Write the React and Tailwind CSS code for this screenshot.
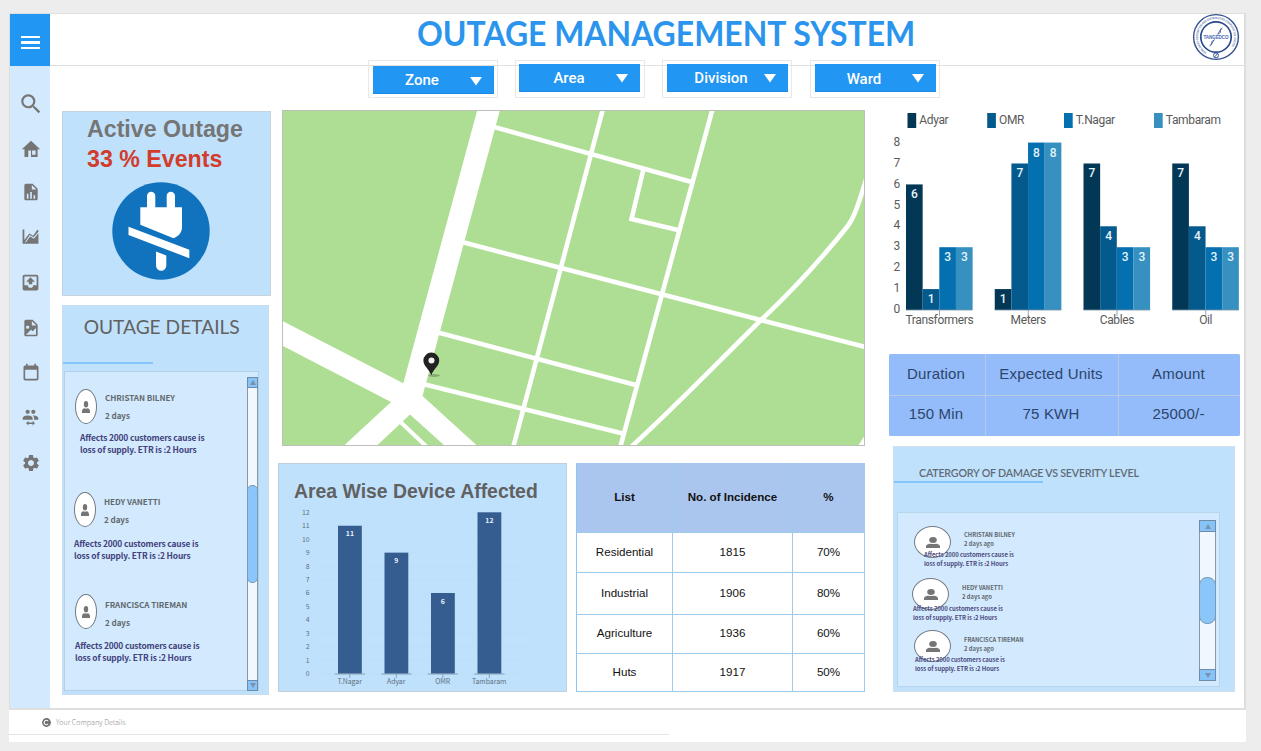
import React from "react";
import { MdSearch, MdSettings } from "react-icons/md";

const ICONS = {
  home: "M12 3L22 12.2H19.2V20.6H12V13.6H9V20.6H4.9V12.2H2ZM13.2 13.6V18.4H17V13.6Z",
  fileChart:
    "M13,9H18.5L13,3.5V9M6,2H14L20,8V20A2,2 0 0,1 18,22H6C4.89,22 4,21.1 4,20V4C4,2.89 4.89,2 6,2M7,20H9V14H7V20M11,20H13V12H11V20M15,20H17V16H15V20Z",
  area: "M2 3H4.2V16.5L10.5 8.2L15.4 11.2L20.6 3.4L22 4.4V21H2ZM5 19.2H6.2L11.6 11.9L16.4 14.8L22 8V6L16 13.1L11 10Z",
  inbox:
    "M14,14H10V11H7L12,6L17,11H14V14M5,15V5H19V15H15A3,3 0 0,1 12,18A3,3 0 0,1 9,15H5M19,3H5C3.89,3 3,3.9 3,5V19A2,2 0 0,0 5,21H19A2,2 0 0,0 21,19V5A2,2 0 0,0 19,3",
  fileImage:
    "M13,9H18.5L13,3.5V9M6,2H14L20,8V20A2,2 0 0,1 18,22H6C4.89,22 4,21.1 4,20V4C4,2.89 4.89,2 6,2M6,20H18V12L14,16L12,14L6,20M8,9A2,2 0 0,0 6,11A2,2 0 0,0 8,13A2,2 0 0,0 10,11A2,2 0 0,0 8,9Z",
  calendar:
    "M19,19H5V8H19M16,1V3H8V1H6V3H5C3.89,3 3,3.89 3,5V19A2,2 0 0,0 5,21H19A2,2 0 0,0 21,19V5C21,3.89 20.1,3 19,3H18V1",
  people:
    "M16,9C18.33,9 23,10.17 23,12.5V15H17V12.5C17,11 16.19,9.89 15.04,9.05L16,9M8,9C10.33,9 15,10.17 15,12.5V15H1V12.5C1,10.17 5.67,9 8,9M8,7A3,3 0 0,1 5,4A3,3 0 0,1 8,1A3,3 0 0,1 11,4A3,3 0 0,1 8,7M16,7A3,3 0 0,1 13,4A3,3 0 0,1 16,1A3,3 0 0,1 19,4A3,3 0 0,1 16,7M9,16.75V19H15V16.75L18.25,20L15,23.25V21H9V23.25L5.75,20L9,16.75Z",
};

function Icon({ d, size = 20 }) {
  return (
    <svg width={size} height={size} viewBox="0 0 24 24" fill="currentColor" fillRule="evenodd">
      <path d={d} />
    </svg>
  );
}

function Cell({ children }) {
  return <div className="flex h-[45px] shrink-0 items-center justify-center">{children}</div>;
}

function Sidebar() {
  return (
    <nav className="flex w-[40px] flex-col bg-[#d3e9fd] text-[#757575]">
      <div className="flex h-[52px] flex-col justify-center gap-[3px] bg-[#2196f3] px-[11px] pt-[5px]">
        <i className="h-[2px] w-[19px] bg-white" />
        <i className="h-[3px] w-[19px] bg-white" />
        <i className="h-[2px] w-[19px] bg-white" />
      </div>
      <div className="flex flex-col pt-[15px] pl-px">
        <Cell><MdSearch size={26} /></Cell>
        <Cell><Icon d={ICONS.home} size={22} /></Cell>
      </div>
      <div className="-mt-[2px] flex flex-col pl-px">
        <Cell><Icon d={ICONS.fileChart} /></Cell>
        <Cell><Icon d={ICONS.area} size={19} /></Cell>
      </div>
      <div className="mt-px flex flex-col pl-px">
        <Cell><Icon d={ICONS.inbox} size={21} /></Cell>
        <Cell><Icon d={ICONS.fileImage} /></Cell>
        <Cell><Icon d={ICONS.calendar} size={20} /></Cell>
        <Cell><Icon d={ICONS.people} size={17} /></Cell>
        <Cell><MdSettings size={20} /></Cell>
      </div>
    </nav>
  );
}

function Logo() {
  return (
    <svg width="48" height="48" viewBox="-24 -24 48 48">
      <circle r="22.4" fill="#fff" stroke="#33508f" strokeWidth="1.4" />
      <circle r="15.2" fill="none" stroke="#2b4a8c" strokeWidth="1.7" />
      <path id="ring" d="M-9.5 15.3A18 18 0 1 1 9.5 15.3" fill="none" />
      <text fontFamily="Liberation Sans, sans-serif" fontSize="3" fill="#5b74a8" fontWeight="bold">
        <textPath href="#ring" textLength="84" lengthAdjust="spacingAndGlyphs">TAMILNADU GENERATION AND DISTRIBUTION CORPORATION LIMITED</textPath>
      </text>
      <circle cy="18.4" r="2.5" fill="none" stroke="#33508f" strokeWidth="1" />
      <path d="M-1.2 19.8L1.2 17" stroke="#33508f" strokeWidth="1" />
      <path d="M6.5 -9L4.2 -6.8L4.5 -4.6L1.4 -2.4M-6.5 9L-4 6.8L-4.4 4.8L-1.2 2.5M5.5 -9L2 -3.2M-5.5 8.6L-2.2 3.2" fill="none" stroke="#33508f" strokeWidth=".8" />
      <text y="1.7" textAnchor="middle" fontFamily="Liberation Sans, sans-serif" fontWeight="bold" fontSize="4.6" fill="#4a6bb0" textLength="25">TANGEDCO</text>
    </svg>
  );
}

function Filter({ label, outer, labelBox, arrow }) {
  return (
    <div className={"flex h-[38px] border border-[#e8e8e8] " + outer}>
      <button className="flex h-[28px] w-[121px] items-center border-b border-[#1e88e5] bg-[#2196f3] font-['Roboto',sans-serif] text-[15px] font-medium text-white">
        <span className={"text-center leading-[20px] " + labelBox}>{label}</span>
        <svg width="12" height="9" viewBox="0 0 12 9" className={arrow}>
          <path d="M0 0H12L6 8.5Z" fill="#fff" />
        </svg>
      </button>
    </div>
  );
}

function ActiveOutage() {
  return (
    <section className="h-[185px] w-[209px] border border-[#c9d3de] bg-[#c0e1fc] pt-[2px]">
      <h2 className="pl-[24px] font-['Liberation_Sans',sans-serif] text-[23.2px] leading-[30px] font-bold text-[#757575]">Active Outage</h2>
      <p className="pl-[24px] font-['Liberation_Sans',sans-serif] text-[23.2px] leading-[30px] font-bold text-[#d13c2c]">33 % Events</p>
      <svg width="98" height="98" viewBox="112 182 98 98" className="mt-[8px] ml-[49px]">
        <circle cx="161" cy="231" r="48.7" fill="#1173bd" />
        <g fill="#fff">
          <path d="M147 208V196A4.1 4.1 0 0 1 155.3 196V208ZM166.7 208V196A4.1 4.1 0 0 1 175 196V208Z" />
          <path d="M140.3 207.3H182V227C182 233 178 236.5 173.5 238.3L140.3 224.7Z" />
          <path d="M128.5 226.7L189.3 249.7V258.2L128.5 235Z" />
          <path d="M156 251.5L166.3 255.5V265.5A5.1 5.1 0 0 1 156 265.5Z" />
        </g>
      </svg>
    </section>
  );
}

function Person({ w, h }) {
  return (
    <svg width={w} height={h} viewBox="0 0 14 11" preserveAspectRatio="none" fill="#757575" className="shrink-0">
      <ellipse cx="7" cy="3" rx="3.8" ry="3" />
      <path d="M0 11V9.6C0 7.4 2.500 6.900 4 6.700C5.500 7.200 8.500 7.200 10 6.700C11.500 6.900 14 7.400 14 9.600V11Z" />
    </svg>
  );
}

function OutageItem({ name, box, text, head, label }) {
  return (
    <article className={"font-['Noto_Sans_CJK_SC','Noto_Sans',sans-serif] font-bold " + box}>
      <div className={"flex h-[36px] " + head}>
        <div className="flex h-[35px] w-[22px] shrink-0 items-center justify-center rounded-[50%] border border-[#707880] bg-white pt-px">
          <Person w={8} h={12} />
        </div>
        <div className={"pl-[8px] text-[8.1px] leading-[18px] tracking-[-0.06px] whitespace-nowrap text-[#616a70] " + label}>
          <p>{name}</p>
          <p>2 days</p>
        </div>
      </div>
      <p className={"text-[8.4px] leading-[12px] tracking-[-0.14px] whitespace-nowrap text-[#42427c] " + text}>
        Affects 2000 customers cause is<br />loss of supply. ETR is :2 Hours
      </p>
    </article>
  );
}

function ScrollBar({ box, end, before, thumb }) {
  const arrow = "flex shrink-0 items-center justify-center border border-[#6f8ba6] bg-[#85c3f8] ";
  return (
    <div className={"flex flex-col border border-[#8b97a3] bg-[#f0f7fe] " + box}>
      <div className={arrow + end}>
        <svg width="6" height="5" viewBox="0 0 6 5"><path d="M3 0L6 5H0Z" fill="#7a93aa" /></svg>
      </div>
      <div className={before} />
      <div className={"shrink-0 border border-[#7b99b5] bg-[#8ac6fa] " + thumb} />
      <div className="flex-1" />
      <div className={arrow + end}>
        <svg width="6" height="5" viewBox="0 0 6 5"><path d="M0 0H6L3 5Z" fill="#7a93aa" /></svg>
      </div>
    </div>
  );
}

function OutageDetails() {
  return (
    <section className="mt-[9px] h-[390px] w-[207px] border border-[#cbdcec] bg-[#c0e1fc] pl-px">
      <h2 className="w-[170px] origin-left scale-x-[0.982] pt-[8px] pl-[20px] font-['Lato',sans-serif] text-[19.5px] leading-[26px] whitespace-nowrap text-[#616161]">OUTAGE DETAILS</h2>
      <div className="mt-[22px] -ml-px h-[2px] w-[90px] bg-[#86c5f9]" />
      <div className="mt-[7px] flex h-[320px] w-[195px] justify-between border border-[#b4d0e8] bg-[#d3e9fd]">
        <div>
          <OutageItem name="CHRISTAN BILNEY" box="h-[103px] pt-[17px]" head="pl-[10px]" text="mt-[6px] pl-[15px]" label="" />
          <OutageItem name="HEDY VANETTI" box="h-[102px] pt-[17px]" head="pl-[9px]" text="mt-[9px] pl-[9px]" label="pt-px" />
          <OutageItem name="FRANCISCA TIREMAN" box="pt-[17px]" head="pl-[10px]" text="mt-[9px] pl-[10px]" label="pt-[2px]" />
        </div>
        <ScrollBar box="mt-[5px] h-[314px] w-[11px]" end="h-[11px] -mx-px -my-px" before="h-[98px]" thumb="h-[98px] -mx-px rounded-[5px]" />
      </div>
    </section>
  );
}

function CityMap() {
  return (
    <svg width="583" height="336" viewBox="282 110 583 336" className="ml-[4px] block">
      <rect x="282" y="110" width="583" height="336" fill="#aede94" />
      <path d="M477.3 110H500L422.5 396L478 446.5H445.5L410 414.5L376 446.5H343L391 402L282 345.5V320.8L403.3 383.3Z" fill="#fff" />
      <g fill="none" stroke="#fff" strokeWidth="4.6">
        <path d="M495 127.3L691.7 182M602.7 110L513 448M712.3 110L620 448M463 242.3L661.7 294.3L866 347.2M439 332.8L635.7 385M424 384.2L621.7 433.3" />
        <path d="M643.5 169L631.5 219L680 230.5" />
        <path d="M400 421.5L428 448" strokeWidth="4" />
        <path d="M866.500 178C858 206 854 218 847 227C822 258 790 293 761 320C718 362 680 402 630 448" />
      </g>
      <path d="M858 446L865 435V446Z" fill="#fff" />
      <ellipse cx="434" cy="375.500" rx="6" ry="1.400" fill="#5b6b55" opacity=".45" />
      <path d="M431.3 375.300C429 369 423.400 366 423.400 360.500A7.900 7.900 0 0 1 439.200 360.500C439.200 366 433.500 369 431.300 375.300Z" fill="#222" />
      <circle cx="431.500" cy="360.600" r="3" fill="#f3f3ee" />
      <rect x="282.500" y="110.500" width="582" height="335" fill="none" stroke="#bcc0b8" />
    </svg>
  );
}

const DEVICES = [["T.Nagar", 11], ["Adyar", 9], ["OMR", 6], ["Tambaram", 12]];

function DeviceChart() {
  const unit = 13.45;
  const base = 673.7;
  return (
    <section className="h-[229px] w-[289px] border border-[#c0cfdd] bg-[#c0e1fc]">
      <h2 className="pt-[14px] pl-[15px] font-['Liberation_Sans',sans-serif] text-[19.4px] leading-[26px] font-bold whitespace-nowrap text-[#616161]">Area Wise Device Affected</h2>
      <svg width="287" height="187" viewBox="279 504 287 187" fontFamily="'Noto Sans CJK SC','Noto Sans',sans-serif" fontSize="6.900" fill="#5c6f80">
        {Array.from({ length: 13 }, (_, i) => (
          <g key={i}>
            <path d={`M314 ${base - i * unit}H527`} stroke="#bbdef9" strokeWidth=".6" />
            <text x="309.700" y={base - i * unit + 2.4} textAnchor="end">{i}</text>
          </g>
        ))}
        {DEVICES.map(([name, n], i) => {
          const x = 338 + i * 46.5;
          return (
            <g key={name}>
              <rect x={x} y={base - n * unit} width="23.8" height={n * unit} fill="#355d90" />
              <path d={`M${x - 3.3} 674H${x + 27}M${x + 11.800} 674V678`} stroke="#8298ac" strokeWidth=".9" fill="none" />
              <text x={x + 11.9} y={base - n * unit + 10.6} textAnchor="middle" fill="#e8f2fc" fontWeight="bold">{n}</text>
              <text x={x + 11.700} y="684" textAnchor="middle">{name}</text>
            </g>
          );
        })}
      </svg>
    </section>
  );
}

const ROWS = [
  ["Residential", "1815", "70%", "h-[40px]"],
  ["Industrial", "1906", "80%", "h-[42px]"],
  ["Agriculture", "1936", "60%", "h-[39px]"],
  ["Huts", "1917", "50%", "h-[38px]"],
];

function IncidenceTable() {
  const grid = "grid grid-cols-[96px_120px_72px] ";
  const cell = "flex items-center justify-center border-r border-b border-[#9fcbea] pb-[2px] ";
  return (
    <div className="w-[289px] border-l border-[#8fc3f0] font-['Liberation_Sans',sans-serif] text-[11.6px] text-[#111]">
      <div className={grid + "h-[70px] bg-[#abc6ee] font-bold"}>
        <div className={cell}>List</div>
        <div className={cell}>No. of Incidence</div>
        <div className={cell}>%</div>
      </div>
      {ROWS.map(([a, b, c, h]) => (
        <div key={a} className={grid + h}>
          <div className={cell}>{a}</div>
          <div className={cell}>{b}</div>
          <div className={cell}>{c}</div>
        </div>
      ))}
    </div>
  );
}

const SERIES = [["Adyar", "#023756", 907.5], ["OMR", "#045a8d", 987.2], ["T.Nagar", "#0570b0", 1064], ["Tambaram", "#3690c0", 1154]];
const GROUPS = [["Transformers", [6, 1, 3, 3]], ["Meters", [1, 7, 8, 8]], ["Cables", [7, 4, 3, 3]], ["Oil", [7, 4, 3, 3]]];

function GroupChart() {
  const unit = 20.93;
  const base = 310;
  return (
    <svg width="357" height="220" viewBox="888 110 357 220" fontFamily="Roboto,sans-serif" fontSize="12" fill="#5a5a5a">
      {SERIES.map(([name, color, x]) => (
        <g key={name}>
          <rect x={x} y="113" width="8.7" height="15" fill={color} />
          <text x={x + 11.800} y="124" letterSpacing="-0.35">{name}</text>
        </g>
      ))}
      {Array.from({ length: 9 }, (_, i) => (
        <text key={i} x="900.300" y={base - i * unit + 3.2} textAnchor="end">{i}</text>
      ))}
      {GROUPS.map(([name, vals], g) => {
        const gx = 906 + g * 88.75;
        return (
          <g key={name}>
            {vals.map((v, i) => (
              <g key={i}>
                <rect x={gx + i * 16.65} y={base - v * unit} width="16.65" height={v * unit} fill={SERIES[i][1]} />
                <text x={gx + i * 16.65 + 8.4} y={base - v * unit + 14} textAnchor="middle" fill="#e6f3fb" fontWeight="500">{v}</text>
              </g>
            ))}
            <path d={`M${gx} 310H${gx + 66.6}M${gx + 33.500} 310V316`} stroke="#7d93a3" strokeWidth=".8" fill="none" />
            <text x={gx + 33.400} y="324" textAnchor="middle" letterSpacing="-0.35">{name}</text>
          </g>
        );
      })}
    </svg>
  );
}

function Estimates() {
  const cell = "flex items-center justify-center bg-[#95bcfa] pr-[2px] ";
  return (
    <div className="mt-[24px] ml-px grid h-[82px] w-[351px] grid-cols-[96px_132px_121px] grid-rows-2 gap-px overflow-hidden rounded-[2px] bg-[#b9c9e4] font-['Liberation_Sans',sans-serif] text-[15px] tracking-[0.18px] text-[#2b456c]">
      <div className={cell}>Duration</div>
      <div className={cell}>Expected Units</div>
      <div className={cell}>Amount</div>
      <div className={cell + "pb-[4px]"}>150 Min</div>
      <div className={cell + "pb-[4px]"}>75 KWH</div>
      <div className={cell + "pb-[4px]"}>25000/-</div>
    </div>
  );
}

function DamageItem({ name, box, head, text, label }) {
  return (
    <article className={"font-['Noto_Sans_CJK_SC','Noto_Sans',sans-serif] font-bold " + box}>
      <div className={"flex h-[25px] " + head}>
        <div className="flex h-[32px] w-[37px] shrink-0 items-center justify-center rounded-[50%] border border-[#707880] bg-white">
          <Person w={14} h={11} />
        </div>
        <div className={"pl-[13px] text-[5.8px] leading-[9px] whitespace-nowrap text-[#616a70] " + label}>
          <p>{name}</p>
          <p>2 days ago</p>
        </div>
      </div>
      <p className={"relative text-[6px] leading-[9px] tracking-[-0.08px] whitespace-nowrap text-[#4c4c80] " + text}>
        Affects 2000 customers cause is<br />loss of supply. ETR is :2 Hours
      </p>
    </article>
  );
}

function DamagePanel() {
  return (
    <section className="mt-[10px] ml-[5px] h-[246px] w-[342px] border border-[#cfdfee] bg-[#c0e1fc]">
      <h2 className="pt-[18px] pl-[25px] font-['Lato',sans-serif] text-[10.700px] leading-[16px] font-semibold tracking-[-0.21px] whitespace-nowrap text-[#5f6b75]">CATERGORY OF DAMAGE VS SEVERITY LEVEL</h2>
      <div className="h-[2px] w-[149px] bg-[#86c5f9]" />
      <div className="mt-[29px] ml-[3px] flex h-[175px] w-[323px] justify-between border border-[#b7d6ee] bg-[#d3e9fd]">
        <div>
          <DamageItem name="CHRISTAN BILNEY" box="h-[52px] pt-[13px]" head="pl-[16px]" text="pl-[26px] -mt-[1px]" label="pt-[4px]" />
          <DamageItem name="HEDY VANETTI" box="h-[52px] pt-[13px]" head="pl-[14px]" text="pl-[15px] pt-px" label="pt-[5px]" />
          <DamageItem name="FRANCISCA TIREMAN" box="pt-[13px]" head="pl-[16px]" text="pl-[17px]" label="pt-[5px]" />
        </div>
        <ScrollBar box="mt-[7px] mr-[3px] h-[161px] w-[17px]" end="h-[12px] -mx-px -my-px" before="h-[46px]" thumb="h-[47px] -mx-px rounded-[8px]" />
      </div>
    </section>
  );
}

export default function App() {
  return (
    <div className="h-[751px] w-[1261px] overflow-hidden bg-[#ededed] pt-[13px] pl-[9px]">
      <div className="flex h-[696px] w-[1237px] border border-r-2 border-[#dedede] bg-white">
        <Sidebar />
        <main className="w-[1195px]">
          <header className="flex h-[52px] items-start justify-between border-b border-[#e0e0e0] pr-[5px] pl-[367px]">
            <h1 className="-mt-px origin-left scale-x-[0.939] font-['Lato',sans-serif] text-[34px] leading-[40px] font-bold whitespace-nowrap text-[#2b95ee]">OUTAGE MANAGEMENT SYSTEM</h1>
            <div className="-mt-px"><Logo /></div>
          </header>
          <div className="-mt-[6px] flex pl-[318px]">
            <Filter label="Zone" outer="w-[130px] pl-[4px] pt-[5px]" labelBox="ml-[21px] w-[56px]" arrow="mt-[3px] ml-[20px]" />
            <Filter label="Area" outer="ml-[17px] w-[130px] pl-[3px] pt-[3px]" labelBox="ml-[22px] mt-px w-[56px]" arrow="ml-[19px] mt-px" />
            <Filter label="Division" outer="ml-[17px] w-[130px] pl-[4px] pt-[3px]" labelBox="ml-[24px] mt-px w-[60px]" arrow="ml-[13px] mt-px" />
            <Filter label="Ward" outer="ml-[18px] w-[130px] pl-[4px] pt-[3px]" labelBox="ml-[21px] mt-[3px] w-[56px]" arrow="ml-[20px] mt-px" />
          </div>
          <div className="flex pt-[12px] pl-[12px]">
            <div className="w-[209px] pt-px">
              <ActiveOutage />
              <OutageDetails />
            </div>
            <div className="ml-[7px] w-[587px]">
              <CityMap />
              <div className="mt-[17px] flex justify-between">
                <DeviceChart />
                <IncidenceTable />
              </div>
            </div>
            <div className="ml-[23px] flex flex-col">
              <GroupChart />
              <Estimates />
              <DamagePanel />
            </div>
          </div>
        </main>
      </div>
      <footer className="h-[33px] w-[1237px] border-t border-[#e0e0e0] bg-white">
        <div className="flex h-[25px] w-[660px] items-center border-b border-[#e4e4e4] pl-[33px]">
          <svg width="9" height="9" viewBox="0 0 9 9">
            <circle cx="4.500" cy="4.500" r="4.400" fill="#6e6e6e" />
            <path d="M6.200 3.300A2.200 2.200 0 1 0 6.200 5.700" fill="none" stroke="#fff" strokeWidth="1.100" />
          </svg>
          <span className="pl-[5px] font-['Noto_Sans_CJK_SC','Noto_Sans',sans-serif] text-[7.100px] leading-[12px] font-light text-[#8f8f8f]">Your Company Details</span>
        </div>
      </footer>
    </div>
  );
}
